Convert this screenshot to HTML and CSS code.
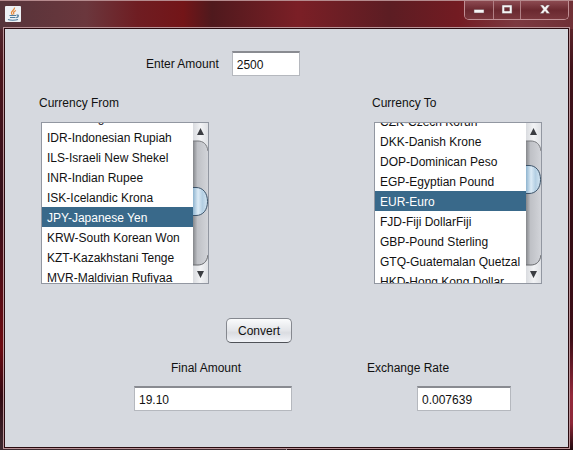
FILE: index.html
```html
<!DOCTYPE html>
<html lang="en">
<head>
<meta charset="utf-8">
<title>Currency Converter</title>
<link rel="stylesheet" href="styles.css">
</head>
<body>
<div class="window">
  <header class="titlebar">
    <svg class="app-icon" viewBox="0 0 16 16" aria-hidden="true">
      <rect width="16" height="16" rx="1" fill="#eef1f4"/>
      <path d="M9.500 1.500C10 4 5.500 5 6.500 7.500L7.500 9M11 4.500C8.500 5.500 8 6.500 9 8.500" fill="none" stroke="#e58a3c" stroke-width="1.300"/>
      <path d="M4.500 9.500h6.500M5 11.500h5.500M11.500 9.200c2.500-.7 2.500 1.600-.3 2.500M3 13.500c2 1 7.500 1 10 0" fill="none" stroke="#4f7d9c" stroke-width="1.200"/>
    </svg>
    <div class="window-buttons">
      <button type="button" class="wb wb-min" aria-label="Minimize"><svg width="12" height="12" viewBox="0 0 12 12"><rect x="1" y="6.500" width="10" height="3.500" fill="#f4f4f4" stroke="#6c4a50" stroke-width=".5"/></svg></button>
      <button type="button" class="wb wb-max" aria-label="Maximize"><svg width="12" height="12" viewBox="0 0 12 12"><path fill-rule="evenodd" d="M1 2h10v8.500H1zM3.500 4.500v3.500h5V4.500z" fill="#f4f4f4" stroke="#6c4a50" stroke-width=".5"/></svg></button>
      <button type="button" class="wb wb-close" aria-label="Close"><svg width="12" height="12" viewBox="0 0 12 12"><path d="M1 2h3.200L6 4.200 7.800 2H11L7.800 6.200 11 10.500H7.800L6 8.200 4.200 10.500H1L4.200 6.200z" fill="#f4f4f4" stroke="#6c4a50" stroke-width=".5"/></svg></button>
    </div>
  </header>
  <main class="panel">
    <div class="amount-row">
      <label for="amount">Enter Amount</label>
      <input class="field field-amount" id="amount" type="text" value="2500">
    </div>
    <div class="currencies">
      <div class="currency">
        <label for="from">Currency From</label>
        <div class="list">
          <select id="from" size="8" data-scroll="16">
            <option>HUF-Hungarian Forint</option>
            <option>IDR-Indonesian Rupiah</option>
            <option>ILS-Israeli New Shekel</option>
            <option>INR-Indian Rupee</option>
            <option>ISK-Icelandic Krona</option>
            <option selected>JPY-Japanese Yen</option>
            <option>KRW-South Korean Won</option>
            <option>KZT-Kazakhstani Tenge</option>
            <option>MVR-Maldivian Rufiyaa</option>
          </select>
          <svg class="scrollbar" width="15" height="160" viewBox="0 0 15 160" aria-hidden="true">
            <use href="#track"/>
            <use href="#thumb" y="64"/>
          </svg>
        </div>
      </div>
      <div class="currency">
        <label for="to">Currency To</label>
        <div class="list">
          <select id="to" size="8" data-scroll="12">
            <option>CZK-Czech Korun</option>
            <option>DKK-Danish Krone</option>
            <option>DOP-Dominican Peso</option>
            <option>EGP-Egyptian Pound</option>
            <option selected>EUR-Euro</option>
            <option>FJD-Fiji DollarFiji</option>
            <option>GBP-Pound Sterling</option>
            <option>GTQ-Guatemalan Quetzal</option>
            <option>HKD-Hong Kong Dollar</option>
          </select>
          <svg class="scrollbar" width="15" height="160" viewBox="0 0 15 160" aria-hidden="true">
            <use href="#track"/>
            <use href="#thumb" y="42"/>
          </svg>
        </div>
      </div>
    </div>
    <button type="button" class="convert">Convert</button>
    <div class="results">
      <div class="result result-final">
        <label for="final">Final Amount</label>
        <input class="field" id="final" type="text" value="19.10">
      </div>
      <div class="result result-rate">
        <label for="rate">Exchange Rate</label>
        <input class="field" id="rate" type="text" value="0.007639">
      </div>
    </div>
  </main>
</div>
<svg class="defs" width="0" height="0" aria-hidden="true">
  <defs>
    <linearGradient id="trackFill"><stop offset="0" stop-color="#85878b"/><stop offset=".3" stop-color="#bfc1c6"/><stop offset="1" stop-color="#d2d4d9"/></linearGradient>
    <linearGradient id="buttonFill"><stop offset="0" stop-color="#d9dbdf"/><stop offset=".5" stop-color="#f2f3f5"/><stop offset="1" stop-color="#dfe1e5"/></linearGradient>
    <linearGradient id="thumbFill"><stop offset="0" stop-color="#8fb4cf"/><stop offset=".35" stop-color="#dcebf6"/><stop offset=".65" stop-color="#b4cfe3"/><stop offset="1" stop-color="#d3e5f2"/></linearGradient>
    <g id="track">
      <rect width="15" height="160" fill="url(#trackFill)"/>
      <path d="M0 0H15V28C14 21 10 18 5 18H0Z" fill="url(#buttonFill)"/>
      <path d="M0 18H5C10 18 14 21 15 28" fill="none" stroke="#77797d"/>
      <path d="M0 160H15V132C14 139 10 142 5 142H0Z" fill="url(#buttonFill)"/>
      <path d="M0 142H5C10 142 14 139 15 132" fill="none" stroke="#66686c"/>
      <path d="M4 12L7.500 5L11 12ZM4 148L7.500 155L11 148Z" fill="#3b3d42"/>
    </g>
    <g id="thumb">
      <path d="M0 .5H3C10 .5 14.500 6 14.500 14.500S10 28.500 3 28.500H0Z" fill="url(#thumbFill)"/>
      <path d="M0 .5H3C10 .5 14.500 6 14.500 14.500S10 28.500 3 28.500H0" fill="none" stroke="#3b5268"/>
    </g>
  </defs>
</svg>
<script src="script.js"></script>
</body>
</html>
```
FILE: styles.css
```css
* { box-sizing: border-box; }

body {
  margin: 0;
  font: 12px/16px "Liberation Sans", Arial, sans-serif;
  color: #111;
}

.window {
  display: flex;
  flex-direction: column;
  min-height: 100vh;
  padding: 0 4px 2px;
  border-top: 1px solid #b58a8d;
  background:
    linear-gradient(to right, #56343a 0%, #6b373d 15%, #6f1d22 24%, #731518 32%, #4f191d 37%, #7b1f26 52%, #5c1d23 68%, #731b22 80%, #7c3940 90%, #703036 100%) top / 100% 28px no-repeat,
    linear-gradient(#703036 0%, #40121a 15%, #330c14 50%, #3c0d16 75%, #93283a 88%, #8d2738 94%, #200a0f 100%) right / 50% 100% no-repeat,
    linear-gradient(#56343a 0%, #4c151c 15%, #35101a 45%, #6e0b12 77%, #330a12 88%, #3c2a30 100%) left / 50% 100% no-repeat;
}

.titlebar {
  display: flex;
  justify-content: space-between;
  align-items: flex-start;
  height: 27px;
  padding-left: 1px;
}

.app-icon {
  width: 16px;
  height: 16px;
  margin-top: 5px;
}

.window-buttons {
  display: flex;
  height: 19px;
  border: 1px solid #c08f94;
  border-top: 0;
  border-radius: 0 0 5px 5px;
}

.wb {
  display: flex;
  align-items: center;
  justify-content: center;
  width: 28px;
  padding: 0 0 2px;
  border: 0;
  background: linear-gradient(#8c4a51, #6b2930 50%, #79373d);
}

.wb-min { border-radius: 0 0 0 4px; }

.wb-max {
  border: solid #b07f84;
  border-width: 0 1px;
}

.wb-close {
  width: 47px;
  border-radius: 0 0 4px;
}

.panel {
  flex: 1;
  padding: 22px 26px 20px 34px;
  border: 1px solid #2a0b10;
  outline: 1px solid #b99397;
  background: #d6d9df;
}

.amount-row {
  display: flex;
  align-items: center;
  gap: 13px;
  padding-left: 107px;
}

.field {
  width: 100%;
  height: 25px;
  padding: 2px 4px 0;
  border: 1px solid #b5b8be;
  border-top: 2px solid #898b91;
  background: #fff;
  color: #111;
  font: inherit;
}

.field-amount { width: 68px; }

.currencies {
  display: flex;
  justify-content: space-between;
  margin-top: 19px;
}

.currency {
  display: flex;
  flex-direction: column;
  gap: 11px;
}

.list {
  display: flex;
  width: 168px;
  margin-left: 2px;
  border: 1px solid #9297a1;
  background: #fff;
}

select {
  flex: 1;
  min-width: 0;
  height: 160px;
  padding: 0;
  border: 0;
  outline: 0;
  background: #fff;
  color: #111;
  font: inherit;
  overflow-y: scroll;
  scrollbar-width: none;
}

select::-webkit-scrollbar { display: none; }

option {
  height: 20px;
  min-height: 20px;
  padding: 4px 5px 0;
  line-height: 16px;
}

option:checked {
  background: #39698a linear-gradient(#39698a, #39698a);
  color: #fff;
  -webkit-text-fill-color: #fff;
}

.scrollbar {
  flex: none;
  display: block;
}

.convert {
  display: block;
  width: 66px;
  height: 25px;
  margin: 34px 0 0 187px;
  padding: 0;
  border: 1px solid #85888f;
  border-bottom-color: #4f5258;
  border-radius: 5px;
  background: linear-gradient(#fafbfc, #e3e5e9 50%, #dadce1 60%, #f2f4f8);
  color: #111;
  font: inherit;
}

.results {
  display: flex;
  gap: 75px;
  margin-top: 17px;
  padding-left: 95px;
}

.result {
  display: flex;
  flex-direction: column;
  gap: 10px;
}

.result-final { width: 158px; }
.result-final label { padding-left: 37px; }
.result-rate { width: 144px; }
.result-rate .field {
  width: 94px;
  align-self: flex-end;
}

.defs { position: absolute; }
```
FILE: script.js
```js
document.querySelectorAll("select[data-scroll]").forEach(function (list) {
  function place() {
    list.scrollTop = Number(list.dataset.scroll);
  }
  place();
  requestAnimationFrame(place);
});
```
